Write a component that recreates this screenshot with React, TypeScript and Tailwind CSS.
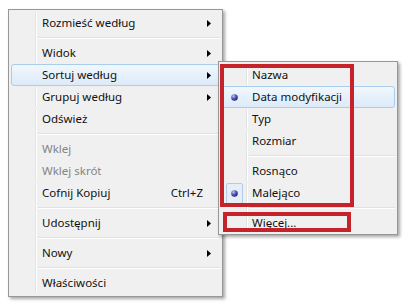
type Row =
  | { kind: 'sep' }
  | { kind: 'item'; label: string; sub?: boolean; shortcut?: string; disabled?: boolean; hot?: boolean };

const mainRows: Row[] = [
  { kind: 'item', label: 'Rozmieść według', sub: true },
  { kind: 'sep' },
  { kind: 'item', label: 'Widok', sub: true },
  { kind: 'item', label: 'Sortuj według', sub: true, hot: true },
  { kind: 'item', label: 'Grupuj według', sub: true },
  { kind: 'item', label: 'Odśwież' },
  { kind: 'sep' },
  { kind: 'item', label: 'Wklej', disabled: true },
  { kind: 'item', label: 'Wklej skrót', disabled: true },
  { kind: 'item', label: 'Cofnij Kopiuj', shortcut: 'Ctrl+Z' },
  { kind: 'sep' },
  { kind: 'item', label: 'Udostępnij', sub: true },
  { kind: 'sep' },
  { kind: 'item', label: 'Nowy', sub: true },
  { kind: 'sep' },
  { kind: 'item', label: 'Właściwości' },
];

const subRows: ({ kind: 'sep' } | { kind: 'item'; label: string; checked?: boolean; hot?: boolean })[] = [
  { kind: 'item', label: 'Nazwa' },
  { kind: 'item', label: 'Data modyfikacji', checked: true, hot: true },
  { kind: 'item', label: 'Typ' },
  { kind: 'item', label: 'Rozmiar' },
  { kind: 'sep' },
  { kind: 'item', label: 'Rosnąco' },
  { kind: 'item', label: 'Malejąco', checked: true },
  { kind: 'sep' },
  { kind: 'item', label: 'Więcej...' },
];

function Arrow() {
  return (
    <svg width="4" height="7" viewBox="0 0 4 7" className="block">
      <polygon points="0,0 4,3.5 0,7" fill="#000" />
    </svg>
  );
}

function Bullet() {
  return (
    <svg width="7" height="7" viewBox="0 0 7 7" className="block">
      <defs>
        <radialGradient id="bl" cx="0.35" cy="0.3" r="0.7">
          <stop offset="0" stopColor="#c4c4f4" />
          <stop offset="0.5" stopColor="#5a5ac4" />
          <stop offset="1" stopColor="#25257a" />
        </radialGradient>
      </defs>
      <circle cx="3.5" cy="3.5" r="3.3" fill="url(#bl)" />
    </svg>
  );
}

const hotCls =
  'rounded-[3px] border border-[#a9cdef] bg-gradient-to-b from-[#f1f7fd] to-[#dceaf8]';

function MainMenu() {
  return (
    <div className="relative ml-[8px] mt-[9px] w-[215px] border border-[#979797] bg-[#f0f0f0] p-[2px] pb-[2px] shadow-[2px_2px_3px_rgba(0,0,0,0.35)]">
      {mainRows.map((r, i) =>
        r.kind === 'sep' ? (
          <div key={i} className="flex h-[8px]">
            <div className="w-[25px] border-r border-[#e2e3e3]" />
            <div className="w-px bg-white" />
            <div className="flex flex-1 flex-col justify-center pl-[1px]">
              <div className="h-px bg-[#e0e0e0]" />
              <div className="h-px bg-white" />
            </div>
          </div>
        ) : (
          <div
            key={i}
            className={`flex h-[22px] items-center ${r.hot ? hotCls : 'border border-transparent'}`}
          >
            <div className={`h-full w-[24px] ${r.hot ? '' : 'border-r border-[#e2e3e3]'}`} />
            <div className={`h-full w-px ${r.hot ? '' : 'bg-white'}`} />
            <div
              className={`flex-1 pl-[5px] ${r.disabled ? 'text-[#848484]' : 'text-[#111]'}`}
            >
              {r.label}
            </div>
            {r.shortcut && <div className="text-[#111]">{r.shortcut}</div>}
            <div className="w-[16px] pl-[4px]">{r.sub && <Arrow />}</div>
          </div>
        ),
      )}
      <SubMenu />
    </div>
  );
}

function SubMenu() {
  return (
    <div className="absolute left-[209px] top-[51px] w-[180px] border border-[#979797] bg-[#f0f0f0] px-[2px] pt-[2px] pb-[0px] shadow-[2px_2px_3px_rgba(0,0,0,0.35)]">
      {subRows.map((r, i) =>
        r.kind === 'sep' ? (
          <div key={i} className="flex h-[8px]">
            <div className="w-[26px] border-r border-[#e2e3e3]" />
            <div className="w-px bg-white" />
            <div className="flex flex-1 flex-col justify-center pl-[1px]">
              <div className="h-px bg-[#e0e0e0]" />
              <div className="h-px bg-white" />
            </div>
          </div>
        ) : (
          <div
            key={i}
            className={`flex h-[22px] items-center ${r.hot ? hotCls : 'border border-transparent'}`}
          >
            <div className={`flex h-full w-[25px] items-center ${r.hot ? '' : 'border-r border-[#e2e3e3]'}`}>
              {r.checked && (
                <div
                  className={`ml-[4px] flex h-[21px] w-[17px] items-center justify-center rounded-[2px] ${
                    r.hot ? '' : 'border border-[#b3cbe6] bg-[#e6eef8]'
                  }`}
                >
                  <Bullet />
                </div>
              )}
            </div>
            <div className={`h-full w-px ${r.hot ? '' : 'bg-white'}`} />
            <div className="flex-1 pl-[4px] text-[#111]">{r.label}</div>
          </div>
        ),
      )}
      <div className="pointer-events-none absolute left-[1px] top-[2px] h-[143px] w-[134px] border-[4px] border-[#c6222a]" />
      <div className="pointer-events-none absolute left-[4px] top-[150px] h-[20px] w-[128px] border-[4px] border-[#c6222a]" />
    </div>
  );
}

export default function App() {
  return (
    <div
      className="h-[306px] w-[408px] overflow-hidden bg-white text-[11.5px] leading-[16px]"
      style={{ fontFamily: '"Noto Sans", "Open Sans", sans-serif' }}
    >
      <MainMenu />
    </div>
  );
}
